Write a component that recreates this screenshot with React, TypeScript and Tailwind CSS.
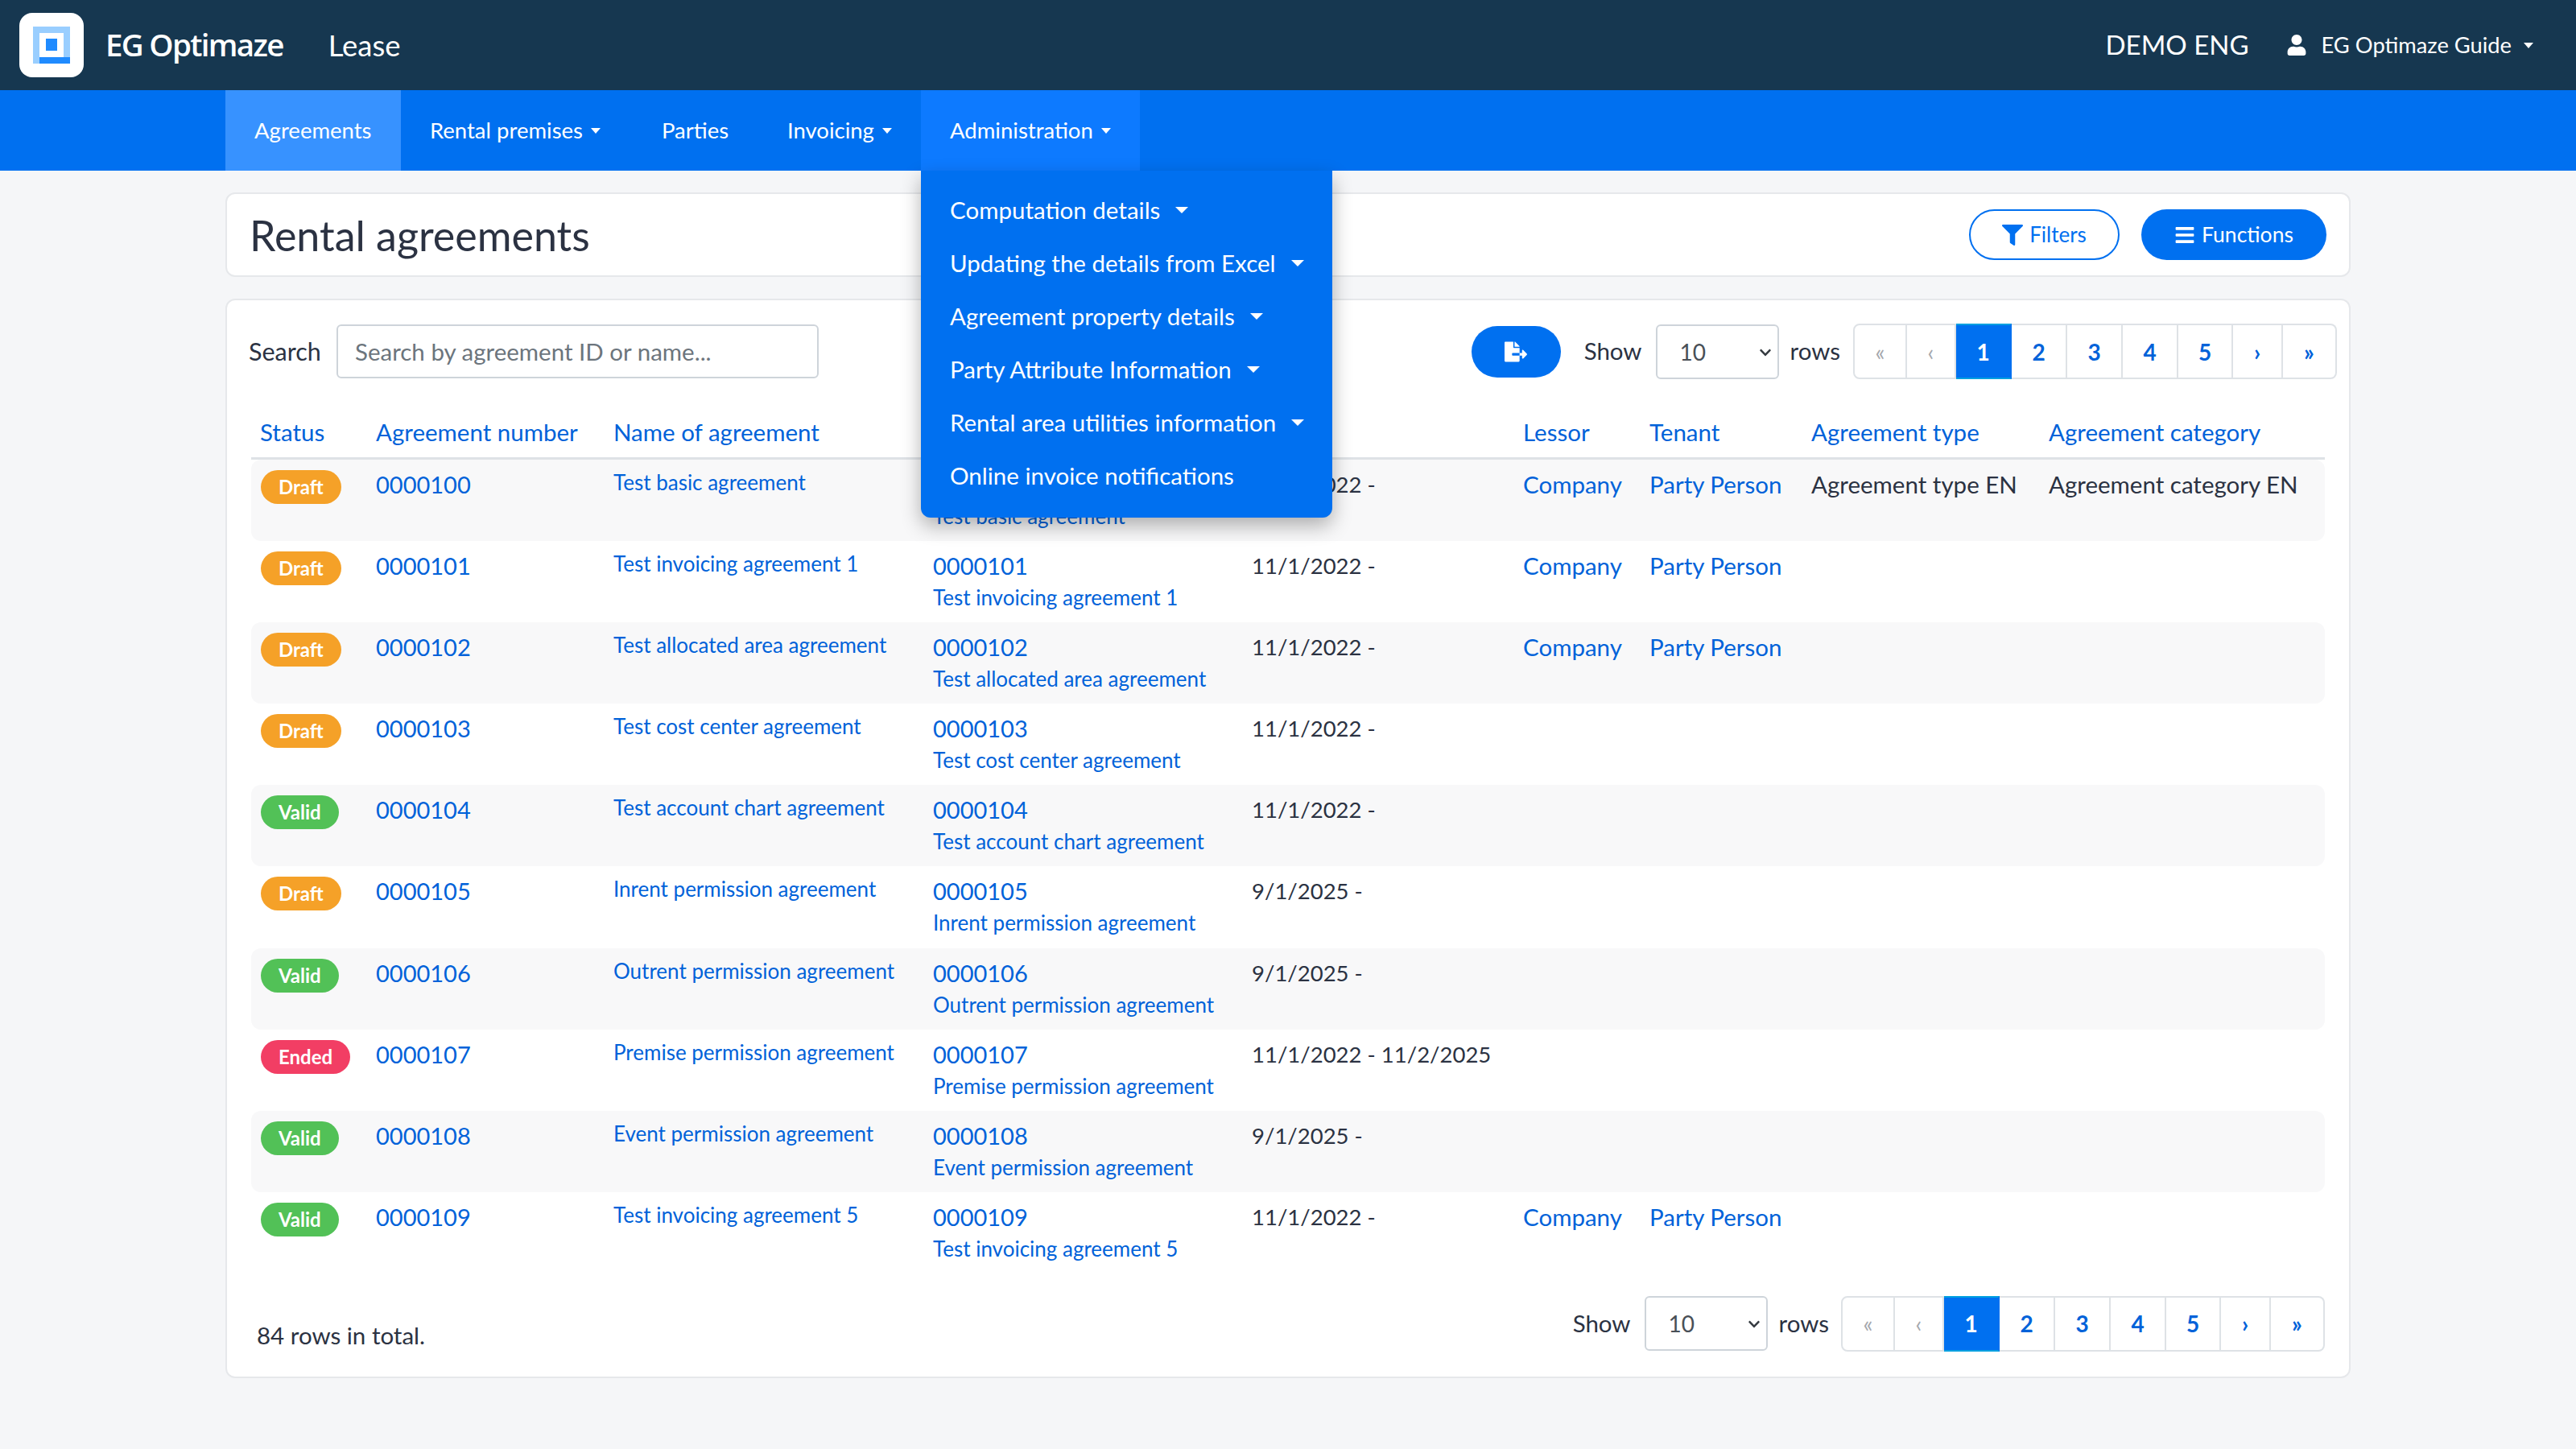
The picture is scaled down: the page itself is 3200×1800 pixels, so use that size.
import React from "react";
import { FaBars, FaChevronDown, FaFileExport, FaFilter, FaUser } from "react-icons/fa";

const GRID =
  "grid grid-cols-[143px_295px_397px_396px_337px_157px_201px_295px_1fr]";

type Status = "Draft" | "Valid" | "Ended";

interface Row {
  status: Status;
  number: string;
  name: string;
  dates: string;
  lessor?: string;
  tenant?: string;
  type?: string;
  category?: string;
}

const rows: Row[] = [
  { status: "Draft", number: "0000100", name: "Test basic agreement", dates: "11/1/2022 -", lessor: "Company", tenant: "Party Person", type: "Agreement type EN", category: "Agreement category EN" },
  { status: "Draft", number: "0000101", name: "Test invoicing agreement 1", dates: "11/1/2022 -", lessor: "Company", tenant: "Party Person" },
  { status: "Draft", number: "0000102", name: "Test allocated area agreement", dates: "11/1/2022 -", lessor: "Company", tenant: "Party Person" },
  { status: "Draft", number: "0000103", name: "Test cost center agreement", dates: "11/1/2022 -" },
  { status: "Valid", number: "0000104", name: "Test account chart agreement", dates: "11/1/2022 -" },
  { status: "Draft", number: "0000105", name: "Inrent permission agreement", dates: "9/1/2025 -" },
  { status: "Valid", number: "0000106", name: "Outrent permission agreement", dates: "9/1/2025 -" },
  { status: "Ended", number: "0000107", name: "Premise permission agreement", dates: "11/1/2022 - 11/2/2025" },
  { status: "Valid", number: "0000108", name: "Event permission agreement", dates: "9/1/2025 -" },
  { status: "Valid", number: "0000109", name: "Test invoicing agreement 5", dates: "11/1/2022 -", lessor: "Company", tenant: "Party Person" },
];

const statusColors: Record<Status, string> = {
  Draft: "bg-[#f5a128]",
  Valid: "bg-[#52c157]",
  Ended: "bg-[#f23e64]",
};

const navItems = [
  { label: "Agreements", caret: false, className: "w-[218px] bg-[#3792ff]" },
  { label: "Rental premises", caret: true, className: "w-[288px]" },
  { label: "Parties", caret: false, className: "w-[156px]" },
  { label: "Invoicing", caret: true, className: "w-[202px]" },
];

const adminItems = [
  { label: "Computation details", caret: true },
  { label: "Updating the details from Excel", caret: true },
  { label: "Agreement property details", caret: true },
  { label: "Party Attribute Information", caret: true },
  { label: "Rental area utilities information", caret: true },
  { label: "Online invoice notifications", caret: false },
];

const pages = [
  { label: "«", width: "w-[67px]", muted: true },
  { label: "‹", width: "w-[61px]", muted: true },
  { label: "1", width: "w-[69px]", active: true },
  { label: "2", width: "w-[69px]" },
  { label: "3", width: "w-[69px]" },
  { label: "4", width: "w-[69px]" },
  { label: "5", width: "w-[68px]" },
  { label: "›", width: "w-[62px]" },
  { label: "»", width: "w-[67px]" },
];

function Caret() {
  return (
    <span className="inline-block h-0 w-0 border-x-[6px] border-t-[7px] border-x-transparent border-t-white" />
  );
}

function Logo() {
  return (
    <div className="ml-6 flex h-20 w-20 items-center justify-center rounded-2xl bg-white">
      <svg width="46" height="46" viewBox="0 0 46 46">
        <rect width="46" height="8" fill="#99ceff" />
        <rect y="8" width="8" height="38" fill="#99ceff" />
        <rect x="38" y="8" width="8" height="30" fill="#99ceff" />
        <rect x="8" y="38" width="38" height="8" fill="#1f8bff" />
        <rect x="16" y="15" width="14" height="15" fill="#1f8bff" />
      </svg>
    </div>
  );
}

function RowsPicker() {
  return (
    <div className="flex items-center text-[#2b3242]">
      <span>Show</span>
      <div className="relative ml-[17px] mr-[14px]">
        <select
          defaultValue="10"
          className="block h-[68px] w-[153px] appearance-none rounded-md border-2 border-[#ced4da] bg-white pl-[28px] text-[28px] text-[#495057]"
        >
          <option>10</option>
          <option>25</option>
          <option>50</option>
        </select>
        <FaChevronDown className="pointer-events-none absolute right-[9px] top-[27px] text-[16px] text-[#343a40]" />
      </div>
      <span>rows</span>
    </div>
  );
}

function Pagination() {
  return (
    <div className="flex h-[69px]">
      {pages.map((page) => (
        <span
          key={page.label}
          className={`flex items-center justify-center border-y-2 border-r-2 text-[28px] font-bold first:rounded-l-lg first:border-l-2 last:rounded-r-lg ${page.width} ${
            page.active
              ? "border-y-[#00a0e0] border-r-[#0070f0] bg-[#0070f0] text-white"
              : page.muted
                ? "border-[#dee2e6] font-normal text-[#a5a8ad]"
                : "border-[#dee2e6] text-[#0062d9]"
          }`}
        >
          {page.label}
        </span>
      ))}
    </div>
  );
}

export default function App() {
  return (
    <div className="min-h-[1800px] bg-[#f5f6f8] font-[Lato,sans-serif] text-[29.5px] text-[#2b3242]">
      <header className="flex h-[112px] items-center bg-[#163750] text-white">
        <Logo />
        <span className="ml-[27px] font-['Open_Sans',sans-serif] text-[38.5px] font-semibold tracking-[-1.7px]">EG Optimaze</span>
        <span className="ml-[56px] text-[36.5px]">Lease</span>
        <span className="ml-auto text-[33px]">DEMO ENG</span>
        <FaUser className="ml-[46px] text-[26px]" />
        <span className="ml-[18px] text-[27.3px]">EG Optimaze Guide</span>
        <span className="ml-[15px] mr-[53px] flex">
          <Caret />
        </span>
      </header>

      <nav className="flex h-[100px] bg-[#0070f0] pl-[280px] text-[27.5px] text-white">
        {navItems.map((item) => (
          <div key={item.label} className={`flex items-center gap-[10px] pl-9 ${item.className}`}>
            {item.label}
            {item.caret && <Caret />}
          </div>
        ))}
        <div className="relative flex w-[272px] items-center gap-[10px] bg-[#0d7aff] pl-9">
          Administration
          <Caret />
          <div className="absolute left-0 top-full z-10 h-[431px] w-[511px] rounded-b-xl bg-[#0070f0] pt-4 text-[29.5px] shadow-[0_10px_24px_rgba(0,0,0,0.3)]">
            {adminItems.map((item) => (
              <div key={item.label} className="flex h-[66px] items-center gap-[19px] whitespace-nowrap pl-9">
                {item.label}
                {item.caret && (
                  <span className="inline-block h-0 w-0 border-x-[8px] border-t-[8px] border-x-transparent border-t-white" />
                )}
              </div>
            ))}
          </div>
        </div>
      </nav>

      <main className="mx-auto w-[2640px] pt-[27px]">
        <section className="flex h-[105px] items-center rounded-xl border-2 border-[#e6e8eb] bg-white pl-[28px] pr-[28px]">
          <h1 className="text-[52px] leading-none">Rental agreements</h1>
          <button className="ml-auto flex h-[63px] w-[187px] items-center justify-center gap-2 rounded-full border-2 border-[#0070f0] text-[26px] text-[#0070f0]">
            <FaFilter className="text-[26px]" />
            Filters
          </button>
          <button className="ml-[27px] flex h-[63px] w-[230px] items-center justify-center gap-2 rounded-full bg-[#0070f0] text-[26.5px] text-white">
            <FaBars className="text-[26px]" />
            Functions
          </button>
        </section>

        <section className="mt-[27px] h-[1341px] rounded-xl border-2 border-[#e6e8eb] bg-white pl-[30px] pr-[30px] pt-[29px]">
          <div className="-ml-[3px] -mr-[15px] flex items-center">
            <span className="w-[109px] shrink-0 text-[30.5px]">Search</span>
            <input
              placeholder="Search by agreement ID or name..."
              className="h-[67px] w-[599px] rounded-md border-2 border-[#ced4da] px-[21px] placeholder:text-[#6c757d]"
            />
            <button className="ml-auto flex h-[64px] w-[111px] items-center justify-center rounded-full bg-[#0070f0] text-white">
              <FaFileExport className="text-[28px]" />
            </button>
            <div className="ml-[29px] mr-[16px]">
              <RowsPicker />
            </div>
            <Pagination />
          </div>

          <div className={`${GRID} mt-[46px] border-b-[3px] border-[#dee2e6] pb-[11px] leading-[40px] text-[#0062d9]`}>
            <span className="pl-[11px]">Status</span>
            <span className="pl-3">Agreement number</span>
            <span className="pl-3">Name of agreement</span>
            <span />
            <span />
            <span className="pl-3">Lessor</span>
            <span className="pl-3">Tenant</span>
            <span className="pl-3">Agreement type</span>
            <span className="pl-3">Agreement category</span>
          </div>

          {rows.map((row, index) => (
            <div
              key={row.number}
              className={`${GRID} h-[101.1px] rounded-xl pt-[13px] leading-[36px] ${
                index % 2 === 0 && index !== 9 ? "bg-[#f8f8f9]" : ""
              }`}
            >
              <div className="pl-[12px]">
                <span
                  className={`inline-flex h-[42px] items-center rounded-full px-[22px] text-[24px] font-bold text-white ${statusColors[row.status]}`}
                >
                  {row.status}
                </span>
              </div>
              <span className="pl-3 text-[29px] text-[#0062d9]">{row.number}</span>
              <span className="pl-3 text-[26px] leading-[30px] text-[#0062d9]">{row.name}</span>
              <div className="pl-3 text-[29px] text-[#0062d9]">
                <div>{row.number}</div>
                <div className="text-[26px] leading-[42px]">{row.name}</div>
              </div>
              <span className="pl-3 text-[27.5px]">{row.dates}</span>
              <span className="pl-3 text-[#0062d9]">{row.lessor}</span>
              <span className="pl-3 text-[#0062d9]">{row.tenant}</span>
              <span className="pl-3">{row.type}</span>
              <span className="pl-3">{row.category}</span>
            </div>
          ))}

          <div className="mt-[25px] flex items-center">
            <span className="mt-[30px] pl-[7px]">84 rows in total.</span>
            <div className="ml-auto mr-[15px]">
              <RowsPicker />
            </div>
            <Pagination />
          </div>
        </section>
      </main>
    </div>
  );
}
